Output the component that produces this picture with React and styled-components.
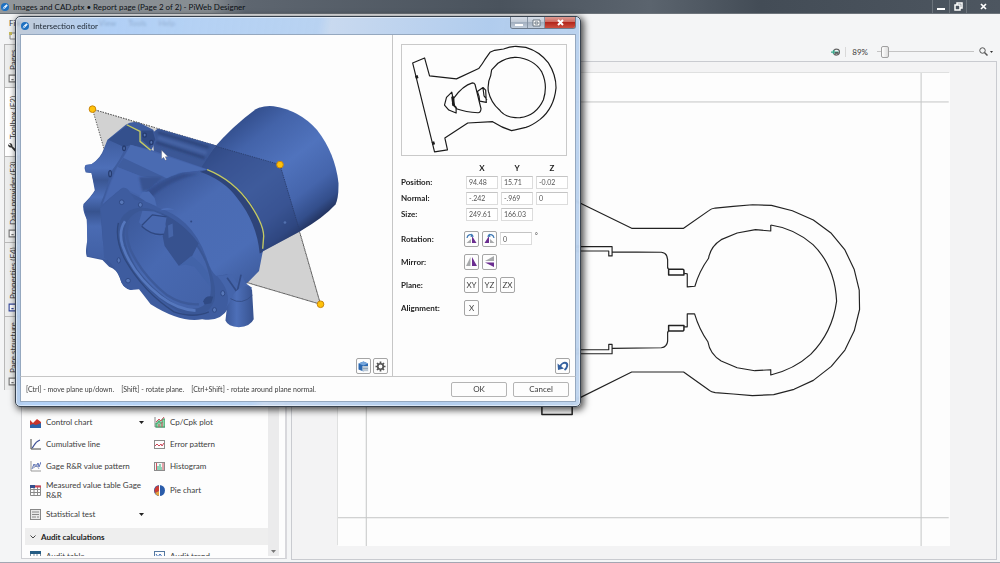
import React from 'react';
import styled, { createGlobalStyle } from 'styled-components';

const GlobalStyle = createGlobalStyle`
    * {
        box-sizing: border-box;
    }

    body {
        margin: 0;
        overflow: hidden;
        font-family: Lato, "Open Sans", sans-serif;
        font-size: 8px;
        line-height: 10px;
        color: #3c3c3c;
        background: #f4f5f6;
    }

    button, input {
        font: inherit;
        color: inherit;
        margin: 0;
        padding: 0;
    }

    svg {
        display: block;
        flex: none;
    }
`;

/* ---------- application shell ---------- */

const Shell = styled.div`
    position: relative;
    display: flex;
    flex-direction: column;
    height: 100vh;
    border-bottom: 1px solid #a3a6b2;
`;

const TitleBar = styled.header`
    display: flex;
    align-items: center;
    height: 14px;
    padding-left: 1px;
    flex: none;
    color: #0c1014;
    background: linear-gradient(90deg, #92979b 0, #868c91 210px, #5e6670 245px, #4a535d 50%, #5b646e 65%, #434c56 76%, #4d5660 100%);
    border-bottom: 1px solid #6d747b;

    h1 {
        flex: 1;
        margin: 0 0 0 4px;
        font-size: 8px;
        font-weight: 400;
    }
`;

const ShellControl = styled.button`
    display: flex;
    align-items: center;
    justify-content: center;
    width: ${props => props.$wide ? '34px' : '17px'};
    height: 13px;
    border: 0;
    border-left: 1px solid #6b737b;
    background: transparent;
`;

const MenuBar = styled.nav`
    display: flex;
    gap: 12px;
    height: 18px;
    padding: 4px 9px;
    flex: none;

    button {
        border: 0;
        background: none;
    }

    button:first-child {
        margin-right: 65px;
    }
`;

const Workspace = styled.main`
    display: flex;
    flex: 1;
    min-height: 0;
`;

const SideTabs = styled.div`
    display: flex;
    flex-direction: column;
    width: 21px;
    padding: 0 0 0 4px;
    flex: none;

    > svg {
        margin: 0 0 4px 5px;
    }
`;

const SideTab = styled.button`
    display: flex;
    align-items: center;
    gap: 4px;
    height: ${props => props.$length};
    padding: 4px;
    writing-mode: vertical-rl;
    transform: rotate(180deg);
    white-space: nowrap;
    font-size: 8px;
    border: 1px solid #b9b9b9;
    border-left: 0;
    border-top: 0;
    background: ${props => props.$active ? '#ffffff' : '#eceded'};
`;

const Toolbox = styled.aside`
    display: flex;
    width: 266px;
    margin: 12px 4px 3px 0;
    padding: 3px 3px 2px;
    flex: none;
    background: #fdfdfd;
    border: 1px solid #cfd0d4;
    border-right: 2px solid #d8d8dc;
`;

const ToolList = styled.div`
    display: flex;
    flex-direction: column;
    justify-content: flex-end;
    flex: 1;
    overflow: hidden;
`;

const ToolGrid = styled.div`
    display: grid;
    grid-template-columns: 124px 1fr;
    height: ${props => props.$clipped ? '11px' : 'auto'};
    overflow: hidden;
    flex: none;
`;

const Tool = styled.button`
    display: flex;
    align-items: center;
    gap: 5px;
    min-height: 22px;
    padding: ${props => props.$tall ? '3px 5px' : '0 5px'};
    text-align: left;
    border: 0;
    background: none;

    span {
        flex: 1;
    }
`;

const SectionHeader = styled.button`
    display: flex;
    align-items: center;
    gap: 5px;
    height: 17px;
    margin-top: 3px;
    padding: 0 5px;
    flex: none;
    font-size: 8px;
    font-weight: 700;
    color: #222222;
    border: 0;
    background: #eeeeee;
`;

const Scrollbar = styled.div`
    display: flex;
    align-items: flex-end;
    justify-content: center;
    width: 11px;
    margin-right: 3px;
    padding-bottom: 3px;
    background: #ebebec;
`;

const ReportPane = styled.section`
    display: flex;
    flex-direction: column;
    flex: 1;
    min-width: 0;
    margin-right: 3px;
`;

const ZoomBar = styled.div`
    display: flex;
    align-items: center;
    justify-content: flex-end;
    gap: 5px;
    height: 29px;
    padding: 10px 4px 0 0;
    flex: none;

    output {
        padding-left: 6px;
        border-left: 1px solid #d9d9d9;
    }

    input {
        appearance: none;
        width: 97px;
        height: 12px;
        margin-left: 4px;
        background: linear-gradient(#c4c4c4, #c4c4c4) center / 100% 1px no-repeat;
    }

    input::-webkit-slider-thumb {
        appearance: none;
        width: 8px;
        height: 12px;
        border: 1px solid #a0a0a0;
        border-radius: 2px;
        background: linear-gradient(90deg, #ffffff, #dddddd);
    }

    button {
        display: flex;
        align-items: center;
        gap: 2px;
        border: 0;
        background: none;
    }
`;

const Canvas = styled.div`
    flex: 1;
    min-height: 0;
    margin-bottom: 2px;
    padding: 11px 46px 13px 46px;
    background: #f3f3f4;
    border: 1px solid #c9cbd0;
`;

const Sheet = styled.div`
    height: 100%;
    background: #fdfdfd;
    box-shadow: -1px -1px 0 #dfe0e0;

    svg {
        width: 100%;
        height: 100%;
    }
`;

/* ---------- dialog ---------- */

const Dialog = styled.section`
    position: absolute;
    left: 15px;
    top: 16px;
    width: 566px;
    padding: 0 4px 4px;
    border: 1px solid #38424e;
    border-radius: 5px;
    background: linear-gradient(100deg, rgba(180, 192, 208, 0.8) 0, rgba(160, 198, 245, 0.8) 90px, rgba(178, 207, 241, 0.9) 48%, rgba(196, 214, 238, 0.92) 50%, rgba(170, 200, 236, 0.92) 75%, rgba(190, 212, 238, 0.94) 100%);
    backdrop-filter: blur(1px);
    box-shadow: inset 0 0 0 1px rgba(255, 255, 255, 0.5), 2px 2px 7px 1px rgba(0, 0, 0, 0.7);
`;

const DialogTitle = styled.header`
    display: flex;
    align-items: center;
    gap: 4px;
    height: 17px;
    padding-left: 1px;
    color: #1c2530;

    h2 {
        flex: 1;
        margin: 0;
        font-size: 8px;
        font-weight: 400;
    }
`;

const Caption = styled.div`
    display: flex;
    align-self: flex-start;
    height: 12px;
    border: 1px solid #6d7b8c;
    border-top: 0;
    border-radius: 0 0 3px 3px;
    overflow: hidden;
`;

const CaptionButton = styled.button`
    display: flex;
    align-items: center;
    justify-content: center;
    width: ${props => props.$close ? '30px' : '17px'};
    border: 0;
    border-right: ${props => props.$close ? '0' : '1px solid #8593a3'};
    background: ${props => props.$close
        ? 'linear-gradient(#dc9a92 0, #cf6a60 45%, #b3271c 50%, #cd5040 100%)'
        : 'linear-gradient(#d5dce6 0, #bfc9d6 45%, #a3b0c0 50%, #c2cedc 100%)'};
`;

const DialogBody = styled.div`
    display: flex;
    border: 1px solid #95a8bf;
    border-bottom: 0;
    background: #fdfdfd;
`;

const Viewport = styled.div`
    position: relative;
    flex: 1;
    border-right: 1px solid #c6c6c6;

    > svg {
        width: 100%;
        height: auto;
    }
`;

const ViewTools = styled.div`
    position: absolute;
    right: 4px;
    bottom: 2px;
    display: flex;
    gap: 2px;
`;

const Settings = styled.form`
    display: flex;
    flex-direction: column;
    width: 182px;
    padding: 9px 8px 2px;
`;

const Preview = styled.div`
    margin-bottom: 8px;
    border: 1px solid #c9c9c9;

    svg {
        width: 100%;
        height: auto;
    }
`;

const Fields = styled.div`
    display: grid;
    grid-template-columns: 62px repeat(3, 32px);
    gap: 3px;
    align-items: center;
`;

const AxisName = styled.span`
    height: 9px;
    line-height: 9px;
    font-weight: 700;
    color: #222222;
    text-align: center;
`;

const FieldLabel = styled.span`
    width: 60px;
    flex: none;
    font-weight: 700;
    color: #222222;
`;

const NumberBox = styled.input`
    width: 32px;
    height: 13px;
    padding: 0 2px;
    font-size: 7px;
    color: #555555;
    border: 1px solid #dcdcdc;
    border-top-color: #c4c4c4;
    background: #ffffff;
`;

const ActionRow = styled.div`
    display: flex;
    align-items: center;
    gap: 3px;
    margin-top: ${props => props.$first ? '10px' : '7px'};

    sup {
        align-self: flex-start;
        line-height: 8px;
    }
`;

const SquareButton = styled.button`
    display: flex;
    align-items: center;
    justify-content: center;
    width: 15px;
    height: 16px;
    border: 1px solid #a5a5a5;
    border-radius: 2px;
    background: #fdfdfd;
`;

const ResetRow = styled.div`
    display: flex;
    justify-content: flex-end;
    margin: auto -3px 0 0;
`;

const DialogFooter = styled.footer`
    display: flex;
    align-items: center;
    gap: 6px;
    height: 26px;
    padding: 0 6px 0 5px;
    border: 1px solid #95a8bf;
    border-top-color: #c6c6c6;
    background: #fdfdfd;

    p {
        display: flex;
        gap: 7px;
        flex: 1;
        margin: 0;
        font-size: 7px;
    }
`;

const WideButton = styled.button`
    width: 56px;
    height: 15px;
    border: 1px solid #b4b4b4;
    border-radius: 2px;
    background: #fdfdfd;
`;

/* ---------- icons ---------- */

const AppIcon = ({ size = 8 }) => (
    <svg width={size} height={size} viewBox="0 0 16 16">
        <circle cx="8" cy="8" r="8" fill="#1c6fc0" />
        <path d="M3 13 5 8 11 2.500 13.500 5 8 11Z" fill="#e8f3ff" />
        <path d="M3 13 8 8" stroke="#1c6fc0" strokeWidth="1" />
    </svg>
);

const Caret = () => (
    <svg width="5" height="3" viewBox="0 0 5 3"><path d="M0 0h5L2.500 3Z" fill="#222222" /></svg>
);

const icons = {
    control: (
        <g>
            <path d="M0 3 3 6 7 2 11 5V11H0Z" fill="#c9352c" />
            <path d="M0 8 3 7 6 8 11 6V11H0Z" fill="#2d62a8" />
        </g>
    ),
    cpk: (
        <g>
            <path d="M1 0V10H11" stroke="#888888" fill="none" />
            <path d="M2 10V6H4V4H6V6H8V2H11V10Z" fill="#8fd3a8" stroke="#35a064" />
            <path d="M2 5 5 2 7 4 10 0M5 10V7M8 10V5" stroke="#d05260" fill="none" />
        </g>
    ),
    cumulative: (
        <g fill="none">
            <path d="M1 0V10H11" stroke="#444444" />
            <path d="M2 9C4 8 4 3 10 1" stroke="#3e4f96" strokeWidth="1.200" />
        </g>
    ),
    error: (
        <g fill="none">
            <rect x="0.500" y="1.500" width="10" height="8" stroke="#8b8b8b" />
            <path d="M1 7 3 5 5 7 7 5 8 7 10 4" stroke="#cc4456" />
        </g>
    ),
    gage: (
        <g fill="none">
            <path d="M1 0V10H11" stroke="#999999" />
            <path d="M2 8 4 3 6 6 8 2 9 6 11 1" stroke="#5a70b8" />
            <path d="M2 6 4 7 6 3 9 8" stroke="#9aa4c0" />
        </g>
    ),
    histogram: (
        <g>
            <rect x="0.500" y="1.500" width="10" height="8" fill="#f5f5f5" stroke="#8b8b8b" />
            <path d="M3 9V5H5V3H7V6H8V9Z" fill="#8fd3b8" />
            <path d="M2.500 2V9M9 2V9" stroke="#d05260" />
        </g>
    ),
    measured: (
        <g>
            <path d="M0.500 1H10.500V10.500H0.500ZM1 4.500H10M1 7.500H10M4 1V10M7.500 1V10" fill="none" stroke="#8a8a8a" />
            <path d="M0 0H5V3H0Z" fill="#344f8c" />
            <path d="M5 1.500H11" stroke="#cc4456" strokeWidth="2" />
        </g>
    ),
    pie: (
        <g>
            <circle cx="5.500" cy="5.500" r="5.500" fill="#2a5caa" />
            <path d="M4.500 0.500A5.500 5.500 0 0 0 1 8L5.500 5.500Z" fill="#cf3d34" />
            <path d="M5 6V11A5.500 5.500 0 0 1 1 8Z" fill="#e9a13c" />
            <path d="M5.500 0V11" stroke="#ffffff" />
        </g>
    ),
    statistical: (
        <g fill="none" stroke="#888888">
            <rect x="0.500" y="0.500" width="10" height="10" fill="#e8e8e8" />
            <path d="M2 3H9M2 5.500H9M2 8H6M7 8H9" />
        </g>
    ),
    table: (
        <g>
            <rect x="0.500" y="0.500" width="10" height="10" fill="#ffffff" stroke="#7b8c9c" />
            <path d="M0 0H11V3H0Z" fill="#245c84" />
            <path d="M1 5.500H10M4 3V10M7 3V10" stroke="#7b8c9c" />
        </g>
    ),
    trend: (
        <g fill="none">
            <rect x="0.500" y="0.500" width="10" height="10" stroke="#5478a0" />
            <path d="M2 3 4 6 6 3 9 7" stroke="#3c6cb4" />
        </g>
    )
};

const ToolIcon = ({ name }) => <svg width="11" height="11" viewBox="0 0 11 11">{icons[name]}</svg>;

const TabIcon = ({ name }) => (
    <svg width="9" height="9" viewBox="0 0 8 8">
        {name === 'wrench'
            ? <path d="M7 8A3 3 0 0 1 4 5L0 1.500 1.500 0 5 4A3 3 0 0 1 8 7L6 5.500 5.500 6Z" fill="#333333" />
            : <path d="M1 1H7V7H1ZM3 3H5" fill="#ffffff" stroke={name === 'properties' ? '#34489c' : '#777777'} />}
    </svg>
);

const RotateIcon = ({ flipped }) => (
    <svg width="11" height="11" viewBox="0 0 22 22">
        <g transform={flipped ? 'translate(22 0) scale(-1 1)' : undefined}>
            <path d="M1 20 10 12V20Z" fill="#a7a9ab" />
            <path d="M12 20V6L21 20Z" fill="#6b2d90" />
            <path d="M2 10C3 3 9 2 13 5" fill="none" stroke="#3d78b4" strokeWidth="2.400" />
            <path d="M11 1 16 7 9 8Z" fill="#3d78b4" />
        </g>
    </svg>
);

const MirrorIcon = ({ horizontal }) => (
    <svg width="11" height="11" viewBox="0 0 22 22">
        <g transform={horizontal ? 'rotate(-90 11 11)' : undefined}>
            <path d="M0 20 9 2V20Z" fill={horizontal ? '#6b2d90' : '#a7a9ab'} />
            <path d="M12 20V2L22 20Z" fill={horizontal ? '#a7a9ab' : '#6b2d90'} />
        </g>
    </svg>
);

const CubeIcon = () => (
    <svg width="11" height="11" viewBox="0 0 22 22">
        <path d="M1 5 11 1 20 5V16L11 21 1 17Z" fill="#2c68b0" />
        <path d="M1 5 11 1 20 5 11 9Z" fill="#74a5dc" />
        <path d="M9 10H21V21H9Z" fill="#e4eaf0" />
        <path d="M10 12H20M10 15H20M10 18H20" stroke="#7891aa" strokeWidth="1.500" />
    </svg>
);

const GearIcon = () => (
    <svg width="11" height="11" viewBox="0 0 22 22" fill="none" stroke="#555555">
        <circle cx="11" cy="11" r="5.500" strokeWidth="3.400" />
        <path d="M11 1V5M11 17V21M1 11H5M17 11H21M4 4 7 7M15 15 18 18M4 18 7 15M15 7 18 4" strokeWidth="3.400" />
    </svg>
);

const UndoIcon = () => (
    <svg width="12" height="12" viewBox="0 0 24 24">
        <path d="M6 14C8 7 14 5 18 6C22 8 21 16 15 20" fill="none" stroke="#34609f" strokeWidth="4" />
        <path d="M1 7 2 20 14 17Z" fill="#34609f" />
    </svg>
);

/* ---------- drawings ---------- */

const SheetDrawing = () => (
    <svg viewBox="-606 -351 1836 1422" preserveAspectRatio="xMinYMin meet" fill="none">
        <path d="M-606 -264H1230M-606 986H1230M-521 -351V1071M1147 -351V1071" stroke="#c4c6c6" strokeWidth="3" />
        <g stroke="#222222" strokeWidth="3.500" strokeLinejoin="round">
            <path d="M60 10 277 116H433L510 62Q516 57 528 55L582 50 640 45 697 47 760 63 823 91 877 131 918 181 946 240 961 302 962 360 946 424 918 482 877 531 823 573 765 600 704 616 640 619 582 614 528 610Q516 608 510 603L433 548H277L110 631" />
            <path d="M695 106V124L649 120 594 130 546 150Q514 170 508 206Q480 245 467 290L444 292V253L434 251M434 412H444V373H466Q480 420 506 457Q512 494 546 515L594 535 647 544 695 541V557Q765 540 815 495Q880 430 893 335Q888 230 822 165Q765 116 695 106" />
            <path d="M388 239H430Q434 239 434 243V256H388ZM388 408H434V420Q434 425 428 425H388Z" strokeWidth="4.500" />
            <path d="M60 171H218V199H208V184H60M219 187 366 188Q384 190 385 210V236H389M60 493H218V465H208V481H60M219 477 366 475Q383 473 385 455V427H389" />
            <path d="M7 640V676H98V640" strokeWidth="4.500" />
        </g>
    </svg>
);

const SectionDrawing = () => (
    <svg viewBox="4 136 494 330" fill="none" stroke="#1a1a1a" strokeWidth="3.500" strokeLinejoin="round">
        <path d="M36 190 72 175 87 229 168 238 235 207Q246 193 253 181L269 158 283 152 310 148Q330 140 347 140L377 143Q420 156 445 190Q468 226 468 265Q462 326 420 360Q395 379 377 384L334 394Q305 385 277 367L202 371 133 416 141 452 102 458Z" />
        <path d="M274 211 293 191Q318 173 347 173Q400 177 425 217Q444 257 430 301Q408 349 360 355Q320 357 302 337L297 331Q272 310 264 275Q261 250 271 229Z" />
        <path d="M160 296Q187 258 216 250Q222 250 224 255L242 328Q241 340 233 340Q195 338 170 329L158 317Z" />
        <path d="M154 278 138 294 132 317 145 332 167 341V323L156 313 158 299ZM231 276 248 264 256 272 258 309 238 305 236 290ZM248 266 251 289 260 301" />
        <path d="M156 291 160 319M47 228 50 237M97 427 100 436" strokeWidth="8" />
    </svg>
);

const handles = [[65, 58], [629, 225], [751, 645]];

const Model = () => (
    <svg viewBox="-150 -165 1116 1026" strokeLinejoin="round">
        <defs>
            <linearGradient id="barrel" gradientUnits="userSpaceOnUse" x1="475" y1="120" x2="710" y2="425">
                <stop offset="0" stopColor="#34508f" />
                <stop offset="0.180" stopColor="#4363a9" />
                <stop offset="0.480" stopColor="#5073bd" />
                <stop offset="0.740" stopColor="#4565ac" />
                <stop offset="0.900" stopColor="#334e8b" />
                <stop offset="1" stopColor="#202f58" />
            </linearGradient>
            <linearGradient id="body" gradientUnits="userSpaceOnUse" x1="290" y1="260" x2="530" y2="590">
                <stop offset="0" stopColor="#3a5697" />
                <stop offset="0.300" stopColor="#4a6bb3" />
                <stop offset="0.750" stopColor="#4b6db6" />
                <stop offset="1" stopColor="#3f5d9f" />
            </linearGradient>
            <linearGradient id="flange" x1="0" y1="0" x2="1" y2="1">
                <stop offset="0" stopColor="#4261a5" />
                <stop offset="0.500" stopColor="#3b5899" />
                <stop offset="1" stopColor="#34508d" />
            </linearGradient>
            <linearGradient id="edge" x1="0" y1="0" x2="0" y2="1">
                <stop offset="0" stopColor="#3f5d9f" />
                <stop offset="0.240" stopColor="#4d6fb8" />
                <stop offset="0.340" stopColor="#3a5693" />
                <stop offset="0.480" stopColor="#4c6eb7" />
                <stop offset="0.600" stopColor="#37538f" />
                <stop offset="0.720" stopColor="#4a6bb3" />
                <stop offset="1" stopColor="#4160a4" />
            </linearGradient>
            <linearGradient id="bore" x1="0" y1="0" x2="1" y2="1">
                <stop offset="0" stopColor="#3b5899" />
                <stop offset="0.450" stopColor="#4869b1" />
                <stop offset="1" stopColor="#4362a7" />
            </linearGradient>
            <linearGradient id="foot">
                <stop offset="0" stopColor="#3b5899" />
                <stop offset="0.400" stopColor="#4d6fb8" />
                <stop offset="1" stopColor="#37528f" />
            </linearGradient>
            <filter id="soft"><feGaussianBlur stdDeviation="4" /></filter>
        </defs>

        <path d="M65 58 629 225 751 645 187 478Z" fill="#d2d2d2" stroke="#555555" strokeWidth="3" strokeDasharray="4 4" />

        {/* barrel */}
        <path d="M380 240 430 175Q485 110 556 58Q580 46 610 49Q690 62 740 120Q795 190 805 280Q806 325 796 345Q760 385 690 425L575 487 480 380Z" fill="url(#barrel)" />
        <path d="M430 168 629 225 690 425 575 487 450 350 385 236Z" fill="#2b4177" opacity="0.480" />
        <path d="M430 168 629 225 688 424" fill="none" stroke="#2c4070" strokeWidth="3" strokeDasharray="4 3" />

        {/* rails behind the arm */}
        <path d="M245 130 262 116 436 167 388 240 250 190Z" fill="#3b5796" />
        <g filter="url(#soft)" fill="none">
            <path d="M262 128 415 173M256 158 402 205" stroke="#2d457c" strokeWidth="8" />
            <path d="M262 144 408 190" stroke="#4765a6" strokeWidth="9" />
        </g>

        {/* rear flange */}
        <path d="M110 150 165 105Q180 93 205 98L248 120 258 150 240 185 400 240 300 340 240 600 205 592 180 602Q155 596 148 568Q140 540 115 532L95 512 48 502Q42 490 50 450L48 390Q34 362 38 343Q62 320 72 302L62 250 46 248Q37 235 45 226L62 224Q90 205 99 178Z" fill="url(#flange)" />
        <path d="M62 224Q96 205 103 172L123 148 165 170Q150 210 118 250Q108 300 90 340L88 360 96 455 110 512 50 500 48 390 38 350 75 302 62 250 44 248V226Z" fill="url(#edge)" />
        <path d="M112 150 172 105 206 126 208 156 240 182 180 166 160 172Z" fill="#34508d" />
        <path d="M212 122 246 122 254 150 238 172 214 151Z" fill="#304a84" />
        <g fill="#5675b2" stroke="#263c70" strokeWidth="4">
            <ellipse cx="222" cy="136" rx="5" ry="6" />
            <ellipse cx="242" cy="158" rx="5" ry="6" />
            <ellipse cx="160" cy="176" rx="4" ry="7" />
            <ellipse cx="118" cy="252" rx="4" ry="9" />
        </g>

        {/* arm */}
        <path d="M180 165 245 182 415 240 335 250Q265 275 210 325L150 296 95 345Q112 290 135 238Z" fill="#4564aa" />
        <path d="M180 165 410 240 324 250 292 268 158 205Z" fill="#4a6bb2" />
        <path d="M158 205 292 268 258 280 205 258 140 232Z" fill="#3f5d9f" />
        <path d="M140 232 205 258 262 268 215 322 156 293 97 342Z" fill="#4868b0" />
        <path d="M205 262 275 262 240 300 215 306Z" fill="#385391" filter="url(#soft)" />

        {/* front body */}
        <path d="M205 322Q265 266 335 249L412 240Q500 275 548 350Q590 425 577 488L566 545 530 582 500 600 440 650 330 520 250 350Z" fill="url(#body)" />
        <path d="M412 240Q500 275 548 350Q590 425 577 488L568 492Q560 400 500 325Q460 270 388 246Z" fill="#2e4479" />
        <path d="M215 318Q270 272 335 253L385 252Q290 275 240 325Z" fill="#304984" opacity="0.700" filter="url(#soft)" />

        {/* front face */}
        <path d="M90 355 120 325 155 295Q168 292 178 308L192 330 215 335Q225 330 240 344L270 358Q310 370 345 402Q385 440 408 505Q420 545 437 560L470 555 500 595 475 655Q450 700 395 690Q330 702 240 645L205 600 180 602Q152 594 148 565Q126 520 100 505Z" fill="#3e5c9f" />
        <path d="M141 450Q135 375 190 358Q230 346 290 378Q370 428 412 520Q440 590 432 632Q412 690 340 674Q250 630 185 545Q145 490 141 450Z" fill="#3a5796" />
        <path d="M162 440Q160 385 205 365Q250 362 300 392Q370 440 405 520Q428 585 418 625Q396 672 335 655Q260 620 200 540Q164 480 162 440Z" fill="url(#bore)" />
        <path d="M163 395Q142 425 156 470Q185 555 270 622Q320 660 375 664" fill="none" stroke="#5577bd" strokeWidth="8" />
        <path d="M175 392Q160 430 178 478Q215 560 290 618Q335 648 385 645" fill="none" stroke="#3d5a9a" strokeWidth="7" />
        <path d="M143 400Q132 445 160 505Q215 605 310 668Q370 688 415 668" fill="none" stroke="#2f487f" strokeWidth="4" />
        <path d="M268 362Q285 350 312 360 350 366Q385 410 400 470Q425 540 450 558L470 590 432 580Q412 548 396 500Q375 430 320 388Z" fill="#4d6fb8" />
        <path d="M272 372Q338 398 384 462L362 505 325 530 282 470 276 440 286 410Z" fill="#37528f" />
        <path d="M325 530 362 500Q385 512 412 552L418 590 372 532 345 525Z" fill="#4263a8" />
        <path d="M215 364 250 366 288 382 280 434 256 440 222 420 205 398Z" fill="#4868af" />
        <path d="M213 408 245 376 288 382M213 410Q245 440 280 434" stroke="#2f4881" strokeWidth="4" fill="none" />
        <path d="M292 408 306 402 308 440 294 446Z" fill="#4665a8" />
        <path d="M398 636Q405 616 428 622L422 642 402 646Z" fill="#304a84" />

        {/* bolt bosses */}
        <g fill="#5777b8" stroke="#304a86" strokeWidth="3">
            <ellipse cx="153" cy="338" rx="7" ry="7" />
            <ellipse cx="209" cy="346" rx="6" ry="7" />
            <ellipse cx="144" cy="513" rx="5" ry="8" />
            <ellipse cx="172" cy="574" rx="7" ry="7" />
            <ellipse cx="457" cy="612" rx="6" ry="8" />
            <ellipse cx="432" cy="662" rx="6" ry="7" />
        </g>
        <path d="M215 308 235 305 252 325 258 350 225 336 205 322Z" fill="#4a6bb2" />

        {/* foot */}
        <path d="M440 560 485 555 500 582 512 552 526 582 545 595 530 615 490 640 468 655Q485 610 440 560Z" fill="#4565ab" />
        <path d="M470 565 500 608 512 556" fill="none" stroke="#324c87" strokeWidth="5" />
        <path d="M482 632Q490 600 525 590Q540 588 545 602L550 690Q540 712 505 714Q472 712 465 694L470 650Z" fill="url(#foot)" />
        <path d="M480 628Q515 650 546 618" fill="none" stroke="#354f8a" strokeWidth="3" />

        {/* cut line */}
        <path d="M168 105 208 125V155L240 182M410 240Q490 272 540 345Q580 405 580 440L577 478" fill="none" stroke="#c4ca62" strokeWidth="4" />
        <circle cx="362" cy="396" r="3" fill="#304984" />
        <circle cx="644" cy="399" r="4" fill="#5270ae" />

        <path d="M65 58 255 114M530 580 751 645 690 432" fill="none" stroke="#666666" strokeWidth="3" strokeDasharray="4 4" />
        {handles.map(([x, y]) => (
            <circle key={x} cx={x} cy={y} r="10" fill="#ffc20a" stroke="#c8860c" strokeWidth="3" />
        ))}
        <path d="M273 182V208L279 203 284 212 288 210 284 201H292Z" fill="#ffffff" stroke="#555566" strokeWidth="1" />
    </svg>
);

/* ---------- content ---------- */

const tabs = [
    { label: 'Pages', length: '43px', icon: 'page' },
    { label: 'Toolbox (F2)', length: '69px', icon: 'wrench', active: true },
    { label: 'Data provider (F3)', length: '86px', icon: 'page' },
    { label: 'Properties (F4)', length: '74px', icon: 'properties' },
    { label: 'Page structure', length: '74px', icon: 'page' }
];

const tools = [
    { label: 'Control chart', icon: 'control', menu: true },
    { label: 'Cp/Cpk plot', icon: 'cpk' },
    { label: 'Cumulative line', icon: 'cumulative' },
    { label: 'Error pattern', icon: 'error' },
    { label: 'Gage R&R value pattern', icon: 'gage' },
    { label: 'Histogram', icon: 'histogram' },
    { label: 'Measured value table Gage R&R', icon: 'measured', tall: true },
    { label: 'Pie chart', icon: 'pie' },
    { label: 'Statistical test', icon: 'statistical', menu: true }
];

const auditTools = [
    { label: 'Audit table', icon: 'table' },
    { label: 'Audit trend', icon: 'trend' }
];

const vectors = [
    { label: 'Position', values: ['94.48', '15.71', '-0.02'] },
    { label: 'Normal', values: ['-.242', '-.969', '0'] },
    { label: 'Size', values: ['249.61', '166.03'] }
];

const axes = ['X', 'Y', 'Z'];

const renderTool = (tool) => (
    <Tool key={tool.label} $tall={tool.tall}>
        <ToolIcon name={tool.icon} />
        <span>{tool.label}</span>
        {tool.menu && <Caret />}
    </Tool>
);

const IntersectionEditor = () => (
    <Dialog role="dialog" aria-labelledby="editor-title">
        <DialogTitle>
            <AppIcon />
            <h2 id="editor-title">Intersection editor</h2>
            <Caption>
                <CaptionButton aria-label="Minimize">
                    <svg width="8" height="8"><path d="M0 6H8" stroke="#ffffff" strokeWidth="2" /></svg>
                </CaptionButton>
                <CaptionButton aria-label="Maximize">
                    <svg width="9" height="8"><path d="M1 1H8V7H1ZM3 3H6V5H3Z" fill="#ffffff" stroke="#6b7681" /></svg>
                </CaptionButton>
                <CaptionButton $close aria-label="Close">
                    <svg width="7" height="7"><path d="M1 1 6 6M6 1 1 6" stroke="#ffffff" strokeWidth="2" /></svg>
                </CaptionButton>
            </Caption>
        </DialogTitle>
        <DialogBody>
            <Viewport>
                <Model />
                <ViewTools>
                    <SquareButton aria-label="Model view"><CubeIcon /></SquareButton>
                    <SquareButton aria-label="Settings"><GearIcon /></SquareButton>
                </ViewTools>
            </Viewport>
            <Settings onSubmit={e => e.preventDefault()}>
                <Preview><SectionDrawing /></Preview>
                <Fields>
                    <span />
                    {axes.map(axis => <AxisName key={axis}>{axis}</AxisName>)}
                    {vectors.map(vector => (
                        <React.Fragment key={vector.label}>
                            <FieldLabel as="label" htmlFor={`${vector.label}-X`}>{vector.label}:</FieldLabel>
                            {axes.map((axis, i) => vector.values[i] === undefined
                                ? <span key={axis} />
                                : (
                                    <NumberBox
                                        key={axis}
                                        id={`${vector.label}-${axis}`}
                                        aria-label={`${vector.label} ${axis}`}
                                        defaultValue={vector.values[i]}
                                    />
                                ))}
                        </React.Fragment>
                    ))}
                </Fields>
                <ActionRow $first>
                    <FieldLabel as="label" htmlFor="rotation">Rotation:</FieldLabel>
                    <SquareButton type="button" aria-label="Rotate right"><RotateIcon /></SquareButton>
                    <SquareButton type="button" aria-label="Rotate left"><RotateIcon flipped /></SquareButton>
                    <NumberBox id="rotation" defaultValue="0" />
                    <sup>°</sup>
                </ActionRow>
                <ActionRow>
                    <FieldLabel>Mirror:</FieldLabel>
                    <SquareButton type="button" aria-label="Mirror left to right"><MirrorIcon /></SquareButton>
                    <SquareButton type="button" aria-label="Mirror top to bottom"><MirrorIcon horizontal /></SquareButton>
                </ActionRow>
                <ActionRow>
                    <FieldLabel>Plane:</FieldLabel>
                    {['XY', 'YZ', 'ZX'].map(plane => <SquareButton key={plane} type="button">{plane}</SquareButton>)}
                </ActionRow>
                <ActionRow>
                    <FieldLabel>Alignment:</FieldLabel>
                    <SquareButton type="button">X</SquareButton>
                </ActionRow>
                <ResetRow>
                    <SquareButton type="button" aria-label="Undo"><UndoIcon /></SquareButton>
                </ResetRow>
            </Settings>
        </DialogBody>
        <DialogFooter>
            <p>
                <span>[Ctrl] - move plane up/down.</span>
                <span>[Shift] - rotate plane.</span>
                <span>[Ctrl+Shift] - rotate around plane normal.</span>
            </p>
            <WideButton>OK</WideButton>
            <WideButton>Cancel</WideButton>
        </DialogFooter>
    </Dialog>
);

const App = () => (
    <Shell>
        <GlobalStyle />
        <TitleBar>
            <AppIcon />
            <h1>Images and CAD.ptx • Report page (Page 2 of 2) - PiWeb Designer</h1>
            <ShellControl aria-label="Minimize">
                <svg width="9" height="9"><path d="M0 7H8" stroke="#ffffff" strokeWidth="2" /></svg>
            </ShellControl>
            <ShellControl aria-label="Restore">
                <svg width="9" height="9"><path d="M1 3H6V8H1ZM3 3V1H8V6H6" fill="none" stroke="#ffffff" strokeWidth="1.500" /></svg>
            </ShellControl>
            <ShellControl $wide aria-label="Close">
                <svg width="7" height="7"><path d="M1 1 6 6M6 1 1 6" stroke="#ffffff" strokeWidth="1.700" /></svg>
            </ShellControl>
        </TitleBar>
        <MenuBar>
            <button>File</button>
            <button>View</button>
            <button>Tools</button>
            <button>Help</button>
        </MenuBar>
        <Workspace>
            <SideTabs>
                <svg width="8" height="8" viewBox="0 0 8 8">
                    <path d="M1 1H7V7H1Z" fill="#ffffff" stroke="#888888" />
                    <path d="M0 0H3V3H0Z" fill="#c8bc5a" />
                </svg>
                {tabs.map(tab => (
                    <SideTab key={tab.label} $length={tab.length} $active={tab.active}>
                        <TabIcon name={tab.icon} />
                        {tab.label}
                    </SideTab>
                ))}
            </SideTabs>
            <Toolbox>
                <ToolList>
                    <ToolGrid>{tools.map(renderTool)}</ToolGrid>
                    <SectionHeader>
                        <svg width="6" height="4" viewBox="0 0 6 4"><path d="M0.500 0.500 3 3 5.500 0.500" fill="none" stroke="#444444" /></svg>
                        Audit calculations
                    </SectionHeader>
                    <ToolGrid $clipped>{auditTools.map(renderTool)}</ToolGrid>
                </ToolList>
                <Scrollbar>
                    <svg width="5" height="3" viewBox="0 0 5 3"><path d="M0 0h5L2.500 3Z" fill="#777777" /></svg>
                </Scrollbar>
            </Toolbox>
            <ReportPane>
                <ZoomBar>
                    <svg width="9" height="8" viewBox="0 0 18 16" fill="none">
                        <circle cx="11" cy="8" r="6" stroke="#666666" strokeWidth="2.500" />
                        <path d="M0 8H8M5 4V12M8 8H15" stroke="#3aa88c" strokeWidth="2.500" />
                        <path d="M8 10H15" stroke="#444444" strokeWidth="3" />
                    </svg>
                    <output htmlFor="zoom">89%</output>
                    <input id="zoom" type="range" min="0" max="100" defaultValue="4" aria-label="Zoom" />
                    <button aria-label="Zoom options">
                        <svg width="9" height="9" viewBox="0 0 18 18" fill="none" stroke="#555555">
                            <circle cx="7" cy="7" r="5.500" strokeWidth="2" />
                            <path d="M11 11 17 17" strokeWidth="3" />
                        </svg>
                        <svg width="3" height="2"><path d="M0 0H3L1.500 2Z" fill="#333333" /></svg>
                    </button>
                </ZoomBar>
                <Canvas>
                    <Sheet><SheetDrawing /></Sheet>
                </Canvas>
            </ReportPane>
        </Workspace>
        <IntersectionEditor />
    </Shell>
);

export default App;
